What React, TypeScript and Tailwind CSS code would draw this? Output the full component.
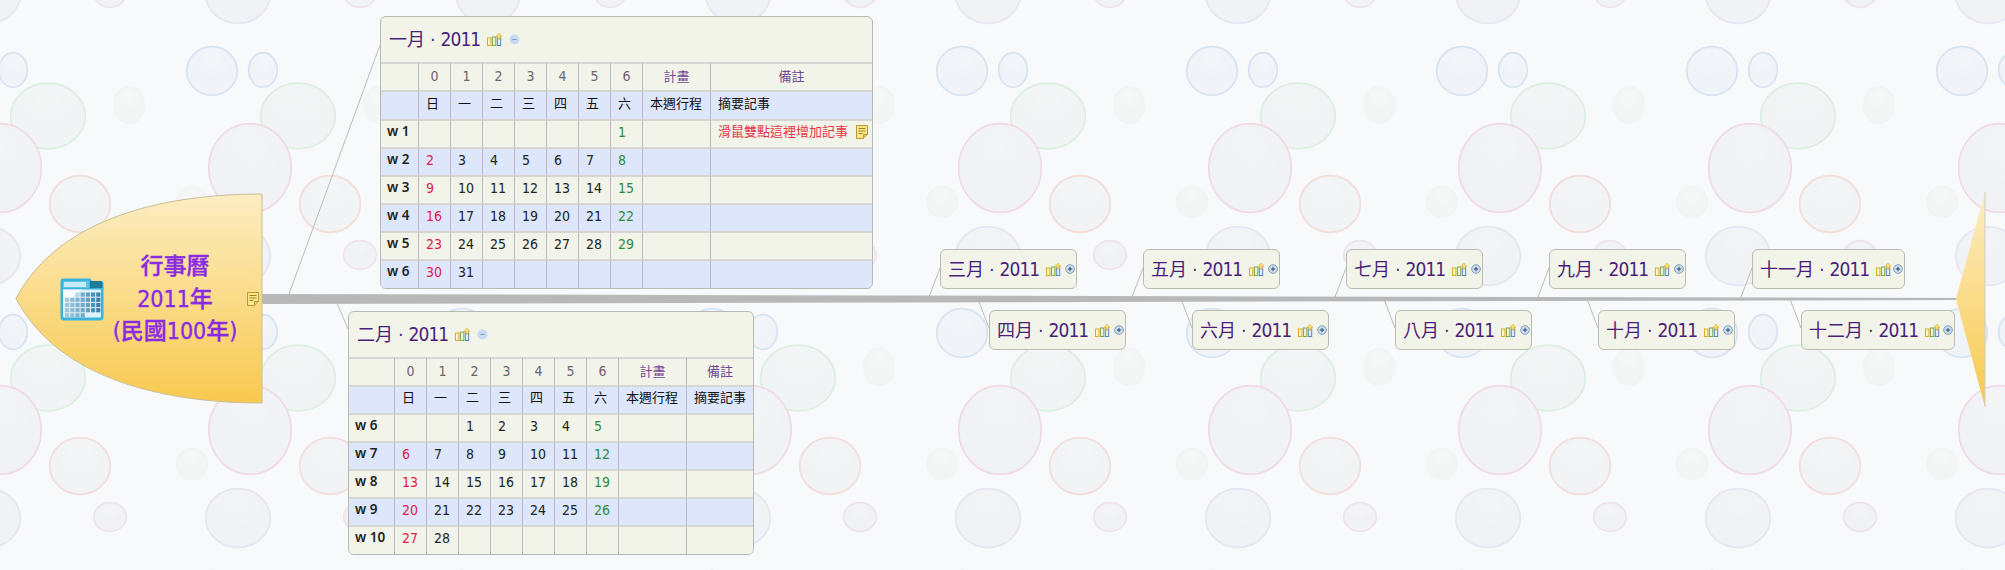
import React from "react";

type Bub = { x: number; y: number; rx: number; ry: number; k: string };
const BUBBLES: Bub[] = [
  { x: 212, y: 71, rx: 26, ry: 25, k: "blue" },
  { x: 13, y: 70, rx: 15, ry: 18, k: "blue" },
  { x: 48, y: 116, rx: 38, ry: 33.5, k: "green" },
  { x: 129, y: 105, rx: 16, ry: 19, k: "faint" },
  { x: 0, y: 168, rx: 42, ry: 45, k: "pink" },
  { x: 80, y: 204, rx: 31, ry: 29, k: "orange" },
  { x: 192, y: 202, rx: 16, ry: 16, k: "faint" },
  { x: 238, y: 256, rx: 33, ry: 30, k: "gray" },
  { x: 110, y: 255, rx: 17, ry: 15, k: "gray2" },
];
const STROKE: Record<string, string> = {
  blue: "#d9e4f2",
  green: "#dcefe1",
  faint: "#f1f5f3",
  pink: "#f1dbe4",
  orange: "#f4dedb",
  gray: "#e5e8f1",
  gray2: "#f0e4ec",
};
const FILL: Record<string, string> = {
  blue: "#f0f3f8",
  green: "#f1f4f4",
  faint: "#f4f6f6",
  pink: "#f1f2f5",
  orange: "#f1f3f5",
  gray: "#f0f2f6",
  gray2: "#f1f2f6",
};

function Background() {
  const offs: [number, number][] = [];
  for (const dx of [-250, 0, 250]) for (const dy of [-262, 0, 262]) offs.push([dx, dy]);
  return (
    <svg width={2005} height={570} className="absolute inset-0">
      <defs>
        <radialGradient id="hl" cx="0.5" cy="0.25" r="0.6">
          <stop offset="0" stopColor="#ffffff" stopOpacity="0.22" />
          <stop offset="0.8" stopColor="#ffffff" stopOpacity="0" />
        </radialGradient>
        <filter id="soft" x="-5%" y="-5%" width="110%" height="110%">
          <feGaussianBlur stdDeviation="0.6" />
        </filter>
        <pattern id="tile" width={250} height={262} patternUnits="userSpaceOnUse">
          <g filter="url(#soft)">
            {offs.map(([dx, dy]) =>
              BUBBLES.map((b, i) => (
                <g key={`${dx}-${dy}-${i}`}>
                  <ellipse cx={b.x + dx} cy={b.y + dy} rx={b.rx - 0.7} ry={b.ry - 0.7} fill={FILL[b.k]} stroke={STROKE[b.k]} strokeWidth={1.8} />
                  <ellipse cx={b.x + dx} cy={b.y + dy} rx={b.rx - 2} ry={b.ry - 2} fill="url(#hl)" />
                </g>
              ))
            )}
          </g>
        </pattern>
      </defs>
      <rect width={2005} height={570} fill="#f7f9fb" />
      <rect width={2005} height={570} fill="url(#tile)" />
    </svg>
  );
}

function Bars() {
  return (
    <svg width={15} height={13} viewBox="0 0 15 13" className="shrink-0">
      <rect x="0.5" y="5" width="3.4" height="7.5" fill="#fff6c8" stroke="#e0aa20" />
      <rect x="5.4" y="4" width="3.4" height="8.5" fill="#e8f4d8" stroke="#7fa850" />
      <rect x="10.3" y="5" width="3.4" height="7.5" fill="#dcecf8" stroke="#5c88c0" />
      <path d="M12 0.3 L14.8 3.4 L13 3.4 L13 6 L11 6 L11 3.4 L9.2 3.4 Z" fill="#ffe680" stroke="#d8a820" strokeWidth="0.7" />
    </svg>
  );
}

function Circle({ plus }: { plus?: boolean }) {
  return plus ? (
    <svg width={10} height={10} viewBox="0 0 10 10" className="shrink-0">
      <circle cx="5" cy="5" r="4.3" fill="#cfe0f0" stroke="#7f9cbc" strokeWidth="1" />
      <path d="M2.8 5 H7.2 M5 2.8 V7.2" stroke="#2a4468" strokeWidth="1" />
    </svg>
  ) : (
    <svg width={11} height={11} viewBox="0 0 11 11" className="shrink-0">
      <circle cx="5.5" cy="5.5" r="5" fill="#c8daf0" />
      <path d="M3.3 5.5 H7.7" stroke="#7f9cc4" strokeWidth="1" />
    </svg>
  );
}

function Note({ className }: { className?: string }) {
  return (
    <svg width={12} height={14} viewBox="0 0 12 14" className={className}>
      <path d="M0.5 0.5 H11.5 V9.5 L7.5 13.5 H0.5 Z" fill="#fbe68c" stroke="#b89a30" />
      <path d="M11.5 9.5 H7.5 V13.5" fill="#e8c860" stroke="#b89a30" />
      <path d="M2.5 3.5 H9.5 M2.5 6 H9.5 M2.5 8.5 H6.5" stroke="#a08420" strokeWidth="1" />
    </svg>
  );
}

function CalendarIcon() {
  const cells: React.ReactNode[] = [];
  const cols = ["#8fbfd8", "#7fb4d0", "#6fa8c8", "#5f9cbf", "#4f94b8", "#2f80a8", "#1f7098"];
  for (let r = 0; r < 5; r++)
    for (let c = 0; c < 7; c++) {
      if (r === 0 && c < 2) continue;
      if (r === 4 && c > 3) continue;
      cells.push(<rect key={`${r}-${c}`} x={5 + c * 5.2} y={14.5 + r * 5.2} width={4.2} height={4.2} fill={r === 0 && c === 2 ? "#a8d0e4" : cols[c]} opacity={0.85} />);
    }
  return (
    <svg width={44} height={43} viewBox="0 0 44 43">
      <path d="M3 0.5 H30 L32 3 H41 Q43.5 3 43.5 6 V39 Q43.5 42.5 40 42.5 H4 Q0.5 42.5 0.5 39 V3 Q0.5 0.5 3 0.5 Z" fill="#38b4dc" />
      <path d="M30 3 H41 Q42.5 3 42.5 6 V10 H30 Z" fill="#1f7a9c" />
      <rect x="3" y="11.5" width="38" height="28" rx="1" fill="#dff1fa" />
      <path d="M3 11.5 H22 L3 27 Z" fill="#ffffff" opacity="0.8" />
      <rect x="3" y="3" width="26" height="7" fill="#5cc4e6" />
      <rect x="4" y="4" width="22" height="5" fill="#e8f8ff" opacity="0.75" />
      {cells}
    </svg>
  );
}

const FONT = "[font-family:'DejaVu_Sans_Condensed','Noto_Sans_CJK_TC',sans-serif]";

function Title({ m }: { m: string }) {
  return (
    <span className="text-[18px] leading-none text-[#491e78] whitespace-nowrap [font-family:'DejaVu_Sans_Condensed','Noto_Sans_CJK_TC',sans-serif]">
      <span>{m}</span>
      <span>&nbsp;·&nbsp;</span>
      <span className="text-[19px] tracking-[-0.9px]">2011</span>
    </span>
  );
}

function SmallNode({ m, left, top, width }: { m: string; left: number; top: number; width: number }) {
  return (
    <div className="absolute h-[40px] flex items-center pl-[7px] pr-[1px] border border-[#bbbbb0] rounded-[6px] bg-[#f3f4e9]" style={{ left, top, width }}>
      <Title m={m} />
      <span className="ml-[7px]"><Bars /></span>
      <span className="ml-auto"><Circle plus /></span>
    </div>
  );
}

const WEEK = ["日", "一", "二", "三", "四", "五", "六"];
const BEIGE = "bg-[#f3f4e9]";
const BLUE = "bg-[#dde6fb]";

function Cell({ children, className, first }: { children?: React.ReactNode; className?: string; first?: boolean }) {
  return (
    <td className={`p-0 pl-[7px] pb-[5px] align-middle border-t-2 border-t-[#d6d6d2] whitespace-nowrap overflow-hidden ${first ? "" : "border-l border-l-[#b7b7bc]"} ${className ?? ""}`}>
      {children}
    </td>
  );
}

function dayColor(i: number) {
  if (i === 0) return "text-[#e0204a]";
  if (i === 6) return "text-[#2f8a3c]";
  return "text-[#222222]";
}

function MonthTable({
  m,
  left,
  top,
  widths,
  weeks,
  rowH,
  note,
}: {
  m: string;
  left: number;
  top: number;
  widths: number[];
  weeks: { w: string; days: (number | null)[] }[];
  rowH: number[];
  note?: boolean;
}) {
  const total = widths.reduce((a, b) => a + b, 0) + 2;
  return (
    <div className={`absolute border border-[#b9b9b4] rounded-[6px] overflow-hidden ${BEIGE} ${FONT}`} style={{ left, top, width: total }}>
      <div className="h-[45px] flex items-center pl-[8px]">
        <Title m={m} />
        <span className="ml-[7px]"><Bars /></span>
        <span className="ml-[7px]"><Circle /></span>
      </div>
      <table className="table-fixed border-separate border-spacing-0 text-[14px] leading-none" style={{ width: total - 2 }}>
        <colgroup>
          {widths.map((w, i) => (
            <col key={i} style={{ width: w }} />
          ))}
        </colgroup>
        <tbody>
          <tr className={BEIGE} style={{ height: rowH[0] }}>
            <Cell first />
            {[0, 1, 2, 3, 4, 5, 6].map((d) => (
              <Cell key={d} className="text-center !pl-0 !pb-[2px] text-[#6a6470]">{d}</Cell>
            ))}
            <Cell className="text-center !pl-0 !pb-[2px] text-[13px] text-[#6c4a94]">計畫</Cell>
            <Cell className="text-center !pl-0 !pb-[2px] text-[13px] text-[#6c4a94]">備註</Cell>
          </tr>
          <tr className={BLUE} style={{ height: rowH[1] }}>
            <Cell first />
            {WEEK.map((d) => (
              <Cell key={d} className="text-[13px] text-[#111111]">{d}</Cell>
            ))}
            <Cell className="text-[13px] text-[#111111]">本週行程</Cell>
            <Cell className="text-[13px] text-[#111111]">摘要記事</Cell>
          </tr>
          {weeks.map((wk, ri) => (
            <tr key={wk.w} className={ri % 2 === 0 ? BEIGE : BLUE} style={{ height: rowH[ri + 2] }}>
              <Cell first className="!pl-[6px] font-semibold text-[13.5px] text-[#222222] [font-family:'Noto_Sans',sans-serif]">{wk.w}</Cell>
              {wk.days.map((d, i) => (
                <Cell key={i} className={dayColor(i)}>{d}</Cell>
              ))}
              <Cell />
              <Cell className="text-[13px] text-[#e8344a]">
                {note && ri === 0 ? (
                  <span className="flex items-center">
                    滑鼠雙點這裡增加記事
                    <Note className="ml-[8px]" />
                  </span>
                ) : null}
              </Cell>
            </tr>
          ))}
        </tbody>
      </table>
    </div>
  );
}

const JAN = [
  { w: "w 1", days: [null, null, null, null, null, null, 1] },
  { w: "w 2", days: [2, 3, 4, 5, 6, 7, 8] },
  { w: "w 3", days: [9, 10, 11, 12, 13, 14, 15] },
  { w: "w 4", days: [16, 17, 18, 19, 20, 21, 22] },
  { w: "w 5", days: [23, 24, 25, 26, 27, 28, 29] },
  { w: "w 6", days: [30, 31, null, null, null, null, null] },
];
const FEB = [
  { w: "w 6", days: [null, null, 1, 2, 3, 4, 5] },
  { w: "w 7", days: [6, 7, 8, 9, 10, 11, 12] },
  { w: "w 8", days: [13, 14, 15, 16, 17, 18, 19] },
  { w: "w 9", days: [20, 21, 22, 23, 24, 25, 26] },
  { w: "w 10", days: [27, 28, null, null, null, null, null] },
];

const UPPER = [
  { m: "三月", x: 940, w: 137 },
  { m: "五月", x: 1143, w: 137 },
  { m: "七月", x: 1346, w: 137 },
  { m: "九月", x: 1549, w: 137 },
  { m: "十一月", x: 1752, w: 153 },
];
const LOWER = [
  { m: "四月", x: 989, w: 137 },
  { m: "六月", x: 1192, w: 137 },
  { m: "八月", x: 1395, w: 137 },
  { m: "十月", x: 1598, w: 137 },
  { m: "十二月", x: 1801, w: 154 },
];

function Diagram() {
  return (
    <svg width={2005} height={570} className="absolute inset-0">
      <defs>
        <linearGradient id="gold" x1="0" y1="0" x2="0" y2="1">
          <stop offset="0" stopColor="#fcedc2" />
          <stop offset="1" stopColor="#f8c94f" />
        </linearGradient>
      </defs>
      <path d="M289 294 L380 45" stroke="#bdbdb8" fill="none" />
      <path d="M337 303 L348 329" stroke="#bdbdb8" fill="none" />
      {UPPER.map((n) => (
        <path key={n.m} d={`M${n.x - 11} 297 L${n.x} 268`} stroke="#bdbdb8" fill="none" />
      ))}
      {LOWER.map((n) => (
        <path key={n.m} d={`M${n.x - 11} 299 L${n.x} 328`} stroke="#bdbdb8" fill="none" />
      ))}
      <polygon points="262,294 1957,298 1957,300 262,304" fill="#b8b8b8" />
      <path d="M262 194 C170 194 60 215 16 298.5 C60 382 170 403 262 403 Z" fill="url(#gold)" stroke="#c9bf98" />
      <path d="M1985 192 L1956 299 L1985 407 Z" fill="url(#gold)" />
      <path d="M1985 192 V407" stroke="#cfcdc4" fill="none" />
    </svg>
  );
}

export default function App() {
  return (
    <div className="relative w-[2005px] h-[570px] overflow-hidden">
      <Background />
      <Diagram />
      <div className="absolute left-[60px] top-[278px]">
        <CalendarIcon />
      </div>
      <div className="absolute left-[100px] top-[250px] w-[150px] text-center text-[23px] leading-[32.5px] font-medium [-webkit-text-stroke:0.35px_#8a2be2] text-[#8a2be2] [font-family:'DejaVu_Sans_Condensed','Noto_Sans_CJK_TC',sans-serif]">
        <div>行事曆</div>
        <div>2011年</div>
        <div className="whitespace-nowrap">(民國100年)</div>
      </div>
      <div className="absolute left-[247px] top-[292px]">
        <Note />
      </div>
      <MonthTable m="一月" left={380} top={16} widths={[37, 32, 32, 32, 32, 32, 32, 32, 68, 162]} weeks={JAN} rowH={[28, 29, 28, 28, 28, 28, 28, 29]} note />
      <MonthTable m="二月" left={348} top={311} widths={[45, 32, 32, 32, 32, 32, 32, 32, 68, 67]} weeks={FEB} rowH={[28, 28, 28, 28, 28, 28, 29]} />
      {UPPER.map((n) => (
        <SmallNode key={n.m} m={n.m} left={n.x} top={249} width={n.w} />
      ))}
      {LOWER.map((n) => (
        <SmallNode key={n.m} m={n.m} left={n.x} top={310} width={n.w} />
      ))}
    </div>
  );
}
